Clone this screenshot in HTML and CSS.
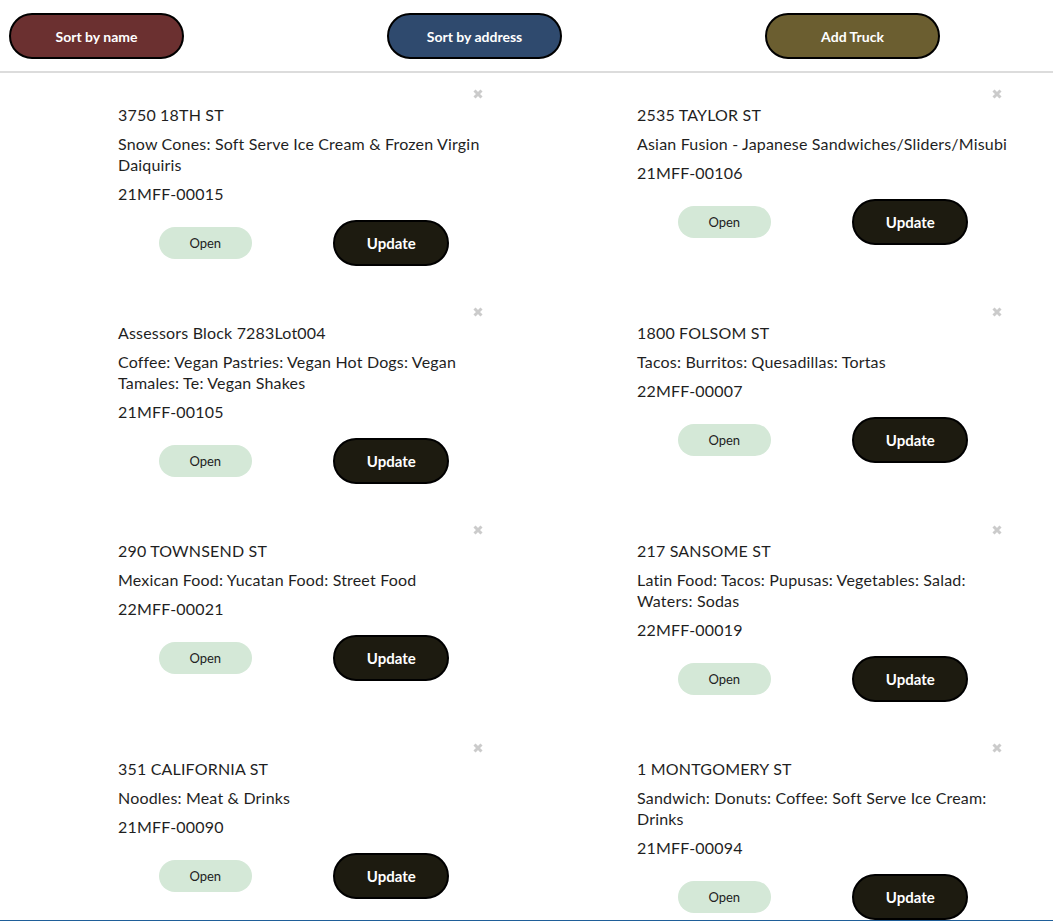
FILE: index.html
```html
<!DOCTYPE html>
<html lang="en">
<head>
<meta charset="utf-8">
<title>Food Trucks</title>
<link rel="stylesheet" href="styles.css">
</head>
<body>
<header class="toolbar">
  <button class="pill pill-name">Sort by name</button>
  <button class="pill pill-address">Sort by address</button>
  <button class="pill pill-add">Add Truck</button>
</header>
<main class="grid">
  <article class="card">
    <span class="close"><svg viewBox="0 0 10 10" width="10" height="10"><path d="M1.5 1.5L8.5 8.5M8.5 1.5L1.5 8.5"/></svg></span>
    <p class="line">3750 18TH ST</p>
    <p class="line">Snow Cones: Soft Serve Ice Cream &amp; Frozen Virgin Daiquiris</p>
    <p class="line">21MFF-00015</p>
    <div class="actions"><button class="open">Open</button><button class="update">Update</button></div>
  </article>
  <article class="card">
    <span class="close"><svg viewBox="0 0 10 10" width="10" height="10"><path d="M1.5 1.5L8.5 8.5M8.5 1.5L1.5 8.5"/></svg></span>
    <p class="line">2535 TAYLOR ST</p>
    <p class="line">Asian Fusion - Japanese Sandwiches/Sliders/Misubi</p>
    <p class="line">21MFF-00106</p>
    <div class="actions"><button class="open">Open</button><button class="update">Update</button></div>
  </article>
  <article class="card">
    <span class="close"><svg viewBox="0 0 10 10" width="10" height="10"><path d="M1.5 1.5L8.5 8.5M8.5 1.5L1.5 8.5"/></svg></span>
    <p class="line">Assessors Block 7283Lot004</p>
    <p class="line">Coffee: Vegan Pastries: Vegan Hot Dogs: Vegan Tamales: Te: Vegan Shakes</p>
    <p class="line">21MFF-00105</p>
    <div class="actions"><button class="open">Open</button><button class="update">Update</button></div>
  </article>
  <article class="card">
    <span class="close"><svg viewBox="0 0 10 10" width="10" height="10"><path d="M1.5 1.5L8.5 8.5M8.5 1.5L1.5 8.5"/></svg></span>
    <p class="line">1800 FOLSOM ST</p>
    <p class="line">Tacos: Burritos: Quesadillas: Tortas</p>
    <p class="line">22MFF-00007</p>
    <div class="actions"><button class="open">Open</button><button class="update">Update</button></div>
  </article>
  <article class="card">
    <span class="close"><svg viewBox="0 0 10 10" width="10" height="10"><path d="M1.5 1.5L8.5 8.5M8.5 1.5L1.5 8.5"/></svg></span>
    <p class="line">290 TOWNSEND ST</p>
    <p class="line">Mexican Food: Yucatan Food: Street Food</p>
    <p class="line">22MFF-00021</p>
    <div class="actions"><button class="open">Open</button><button class="update">Update</button></div>
  </article>
  <article class="card">
    <span class="close"><svg viewBox="0 0 10 10" width="10" height="10"><path d="M1.5 1.5L8.5 8.5M8.5 1.5L1.5 8.5"/></svg></span>
    <p class="line">217 SANSOME ST</p>
    <p class="line">Latin Food: Tacos: Pupusas: Vegetables: Salad: Waters: Sodas</p>
    <p class="line">22MFF-00019</p>
    <div class="actions"><button class="open">Open</button><button class="update">Update</button></div>
  </article>
  <article class="card">
    <span class="close"><svg viewBox="0 0 10 10" width="10" height="10"><path d="M1.5 1.5L8.5 8.5M8.5 1.5L1.5 8.5"/></svg></span>
    <p class="line">351 CALIFORNIA ST</p>
    <p class="line">Noodles: Meat &amp; Drinks</p>
    <p class="line">21MFF-00090</p>
    <div class="actions"><button class="open">Open</button><button class="update">Update</button></div>
  </article>
  <article class="card">
    <span class="close"><svg viewBox="0 0 10 10" width="10" height="10"><path d="M1.5 1.5L8.5 8.5M8.5 1.5L1.5 8.5"/></svg></span>
    <p class="line">1 MONTGOMERY ST</p>
    <p class="line">Sandwich: Donuts: Coffee: Soft Serve Ice Cream: Drinks</p>
    <p class="line">21MFF-00094</p>
    <div class="actions"><button class="open">Open</button><button class="update">Update</button></div>
  </article>
</main>
<footer class="footer"></footer>
</body>
</html>
```
FILE: styles.css
```css
* { box-sizing: border-box; }

html, body {
  margin: 0;
  padding: 0;
  background: #ffffff;
}

body {
  font-family: Lato, "Noto Sans", sans-serif;
  color: #1f1f1f;
}

.toolbar {
  display: flex;
  align-items: flex-start;
  gap: 203px;
  padding: 13px 9px 12px;
  border-bottom: 2px solid #dcdcdc;
}

.pill {
  width: 175px;
  height: 46px;
  border: 2px solid #000;
  border-radius: 23px;
  color: #fff;
  font-family: Lato, "Noto Sans", sans-serif;
  font-weight: 700;
  font-size: 14px;
  cursor: pointer;
}

.pill-name { background: #6b3030; }
.pill-address { background: #2f4a6e; }
.pill-add { background: #6b5e30; }

.grid {
  display: grid;
  grid-template-columns: 519px 519px;
  row-gap: 40px;
  padding: 15px 0 0 118px;
  align-items: start;
}

.card {
  position: relative;
  width: 372px;
  padding-top: 16px;
}

.close {
  position: absolute;
  top: 1px;
  right: 7px;
  width: 10px;
  height: 10px;
  display: block;
}

.close svg {
  display: block;
  stroke: #cbcbcb;
  stroke-width: 3;
  fill: none;
}

.line {
  margin: 0 0 8px;
  font-size: 16px;
  line-height: 21px;
  letter-spacing: 0.18px;
}

.actions {
  display: flex;
  justify-content: space-around;
  align-items: center;
  margin-top: 16px;
}

.open {
  width: 93px;
  height: 32px;
  border: none;
  border-radius: 16px;
  background: #d4e8d7;
  color: #222;
  font-family: Lato, "Noto Sans", sans-serif;
  font-size: 13px;
}

.update {
  width: 116px;
  height: 46px;
  border: 2px solid #000;
  border-radius: 23px;
  background: #1d1b10;
  color: #fff;
  font-family: Lato, "Noto Sans", sans-serif;
  font-weight: 700;
  font-size: 15px;
}

.footer {
  height: 40px;
  border-top: 2px solid #1f5f99;
}
```
